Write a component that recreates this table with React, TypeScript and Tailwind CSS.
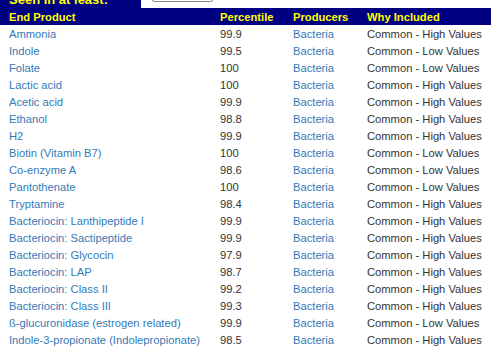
const rows: [string, string, string][] = [
  ["Ammonia", "99.9", "High"],
  ["Indole", "99.5", "Low"],
  ["Folate", "100", "Low"],
  ["Lactic acid", "100", "High"],
  ["Acetic acid", "99.9", "High"],
  ["Ethanol", "98.8", "High"],
  ["H2", "99.9", "High"],
  ["Biotin (Vitamin B7)", "100", "Low"],
  ["Co-enzyme A", "98.6", "Low"],
  ["Pantothenate", "100", "Low"],
  ["Tryptamine", "98.4", "High"],
  ["Bacteriocin: Lanthipeptide I", "99.9", "High"],
  ["Bacteriocin: Sactipeptide", "99.9", "High"],
  ["Bacteriocin: Glycocin", "97.9", "High"],
  ["Bacteriocin: LAP", "98.7", "High"],
  ["Bacteriocin: Class II", "99.2", "High"],
  ["Bacteriocin: Class III", "99.3", "High"],
  ["ß-glucuronidase (estrogen related)", "99.9", "Low"],
  ["Indole-3-propionate (Indolepropionate)", "98.5", "High"],
];

const cols = "grid grid-cols-[211px_73px_74px_1fr] pl-[9px]";

export default function App() {
  return (
    <div className="h-[353px] w-[494px] overflow-hidden bg-white font-['Liberation_Sans',Arial,sans-serif] text-[11.2px]">
      <div className="w-[491px]">
        <div className="flex h-[8px] overflow-hidden">
          <div className="flex w-[141px] items-end bg-[#000080] pl-[9px]">
            <span className="mb-[2px] text-[13px] font-bold leading-[13px] text-[#ffff00]">Seen in at least:</span>
          </div>
          <div className="flex-1 pl-[11px]">
            <div className="mt-[-18px] h-[20px] w-[61px] rounded-[2px] border border-[#8a8a8a] bg-white" />
          </div>
        </div>
        <div className={`${cols} h-[17px] items-center bg-[#000080] pt-px font-bold text-[#ffff00]`}>
          <span>End Product</span>
          <span>Percentile</span>
          <span>Producers</span>
          <span>Why Included</span>
        </div>
        {rows.map(([name, pct, kind]) => (
          <div key={name} className={`${cols} h-[17px] items-center pt-px`}>
            <span className="whitespace-nowrap text-[#337ab7]">{name}</span>
            <span className="text-[#333]">{pct}</span>
            <span className="text-[#337ab7]">Bacteria</span>
            <span className="whitespace-nowrap text-[#333]">Common - {kind} Values</span>
          </div>
        ))}
      </div>
    </div>
  );
}
